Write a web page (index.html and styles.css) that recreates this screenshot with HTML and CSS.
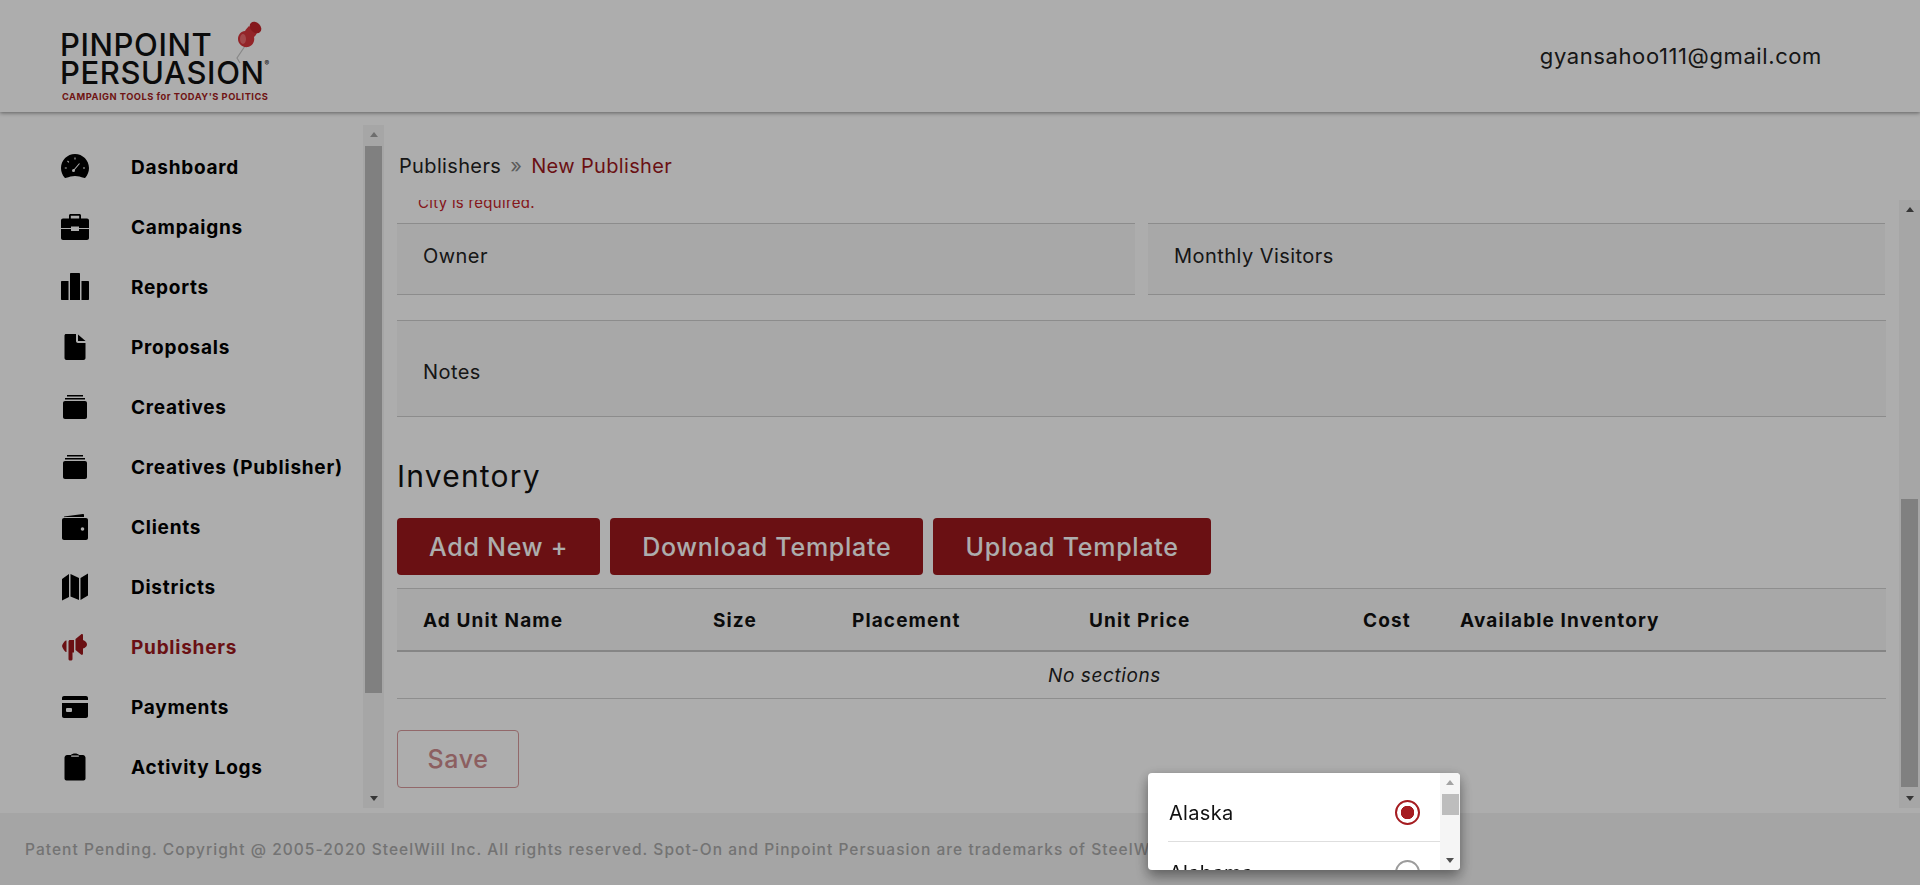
FILE: index.html
```html
<!DOCTYPE html>
<html lang="en">
  <head>
    <meta charset="UTF-8" />
    <title>Pinpoint Persuasion</title>
    <link rel="stylesheet" href="styles.css">
  </head>
  <body>
    <header class="header">
      <div class="logo">
        <div class="logo-name">PINPOINT</div>
        <div class="logo-name">PERSUASION<sup class="logo-reg">®</sup></div>
        <div class="logo-tag">CAMPAIGN TOOLS for TODAY'S POLITICS</div>
        <svg class="logo-pin" width="30" height="44" viewBox="0 0 30 44">
          <path d="M7 43l-3-5 8-12" fill="none" stroke="#c9c9c9" stroke-width="1.2" />
          <path d="M16 6l8 7c-1 2-2 3-3 4 1 4-1 9-6 10-5 1-10-3-10-8 0-4 3-8 7-8 1-2 3-4 4-5z" fill="#d9353b" />
          <ellipse cx="22.5" cy="7.5" rx="5" ry="6.5" transform="rotate(-45 22.5 7.5)" fill="#c4242a" />
          <ellipse cx="10" cy="19" rx="3" ry="5" fill="#ee6a6e" />
        </svg>
      </div>
      <div class="user-email">gyansahoo111@gmail.com</div>
    </header>

    <div class="middle">
      <aside class="sidebar">
        <nav class="nav">
          <a class="nav-item">
            <svg class="nav-icon" viewBox="0 0 28 28"><path d="M14 1C6.3 1 0 7.3 0 15c0 3.6 1.3 6.9 3.5 9.4.5.5 1.1.6 1.8.4C8 24 11 23 14 23s6 1 8.7 1.8c.7.2 1.3.1 1.8-.4C26.700 21.900 28 18.600 28 15 28 7.300 21.700 1 14 1z" /><path d="M12.500 17.500l6-7M14 4.500v2M6.500 8l1.400 1.300M3.800 15h2M22 15h2" stroke="#fff" stroke-width="1.1" /><circle cx="12.500" cy="17.500" r="1.500" fill="#fff" /></svg>
            <span>Dashboard</span>
          </a>
          <a class="nav-item">
            <svg class="nav-icon" viewBox="0 0 28 28"><path d="M8 6V2.500C8 1.700 8.700 1 9.500 1h9c.8 0 1.500.7 1.500 1.500V6h-1.800V2.800H9.800V6z" /><path d="M2 5.500h24c1.100 0 2 .9 2 2V15H18v-1.500h-8V15H0V7.500c0-1.100.9-2 2-2zM0 16h10v2h8v-2h10v9c0 1.100-.9 2-2 2H2c-1.100 0-2-.9-2-2z" /></svg>
            <span>Campaigns</span>
          </a>
          <a class="nav-item">
            <svg class="nav-icon" viewBox="0 0 28 28"><path d="M1 8h6.500v19H1c-.6 0-1-.4-1-1V9c0-.6.4-1 1-1zM9 1c0-.6.4-1 1-1h8c.6 0 1 .4 1 1v26H9zM20.500 8H27c.6 0 1 .4 1 1v17c0 .6-.4 1-1 1h-6.500z" /></svg>
            <span>Reports</span>
          </a>
          <a class="nav-item">
            <svg class="nav-icon" viewBox="0 0 28 28"><path d="M5 1h10v7c0 1.100.9 2 2 2h7.500v15c0 1.100-.9 2-2 2H5.500c-1.100 0-2-.9-2-2V2.500C3.500 1.700 4.200 1 5 1z" /><path d="M17 1.500L24.500 8H17z" /></svg>
            <span>Proposals</span>
          </a>
          <a class="nav-item">
            <svg class="nav-icon" viewBox="0 0 28 28"><path d="M6 2h16v1.500H6zM4 5h20v1.500H4z" /><path d="M4 8h20c1.100 0 2 .9 2 2v14c0 1.100-.9 2-2 2H4c-1.100 0-2-.9-2-2V10c0-1.100.9-2 2-2z" /></svg>
            <span>Creatives</span>
          </a>
          <a class="nav-item">
            <svg class="nav-icon" viewBox="0 0 28 28"><path d="M6 2h16v1.500H6zM4 5h20v1.500H4z" /><path d="M4 8h20c1.100 0 2 .9 2 2v14c0 1.100-.9 2-2 2H4c-1.100 0-2-.9-2-2V10c0-1.100.9-2 2-2z" /></svg>
            <span>Creatives (Publisher)</span>
          </a>
          <a class="nav-item">
            <svg class="nav-icon" viewBox="0 0 28 28"><path d="M3 3.500L22 1c.6 0 1 .4 1 1v2H5.500C4 4 3 4.500 3 3.500z" /><path d="M3 5h22c1.100 0 2 .9 2 2v18c0 1.100-.9 2-2 2H3c-1.100 0-2-.9-2-2V7c0-1.100.9-2 2-2z" /><circle cx="21.500" cy="16" r="1.800" fill="#fff" /></svg>
            <span>Clients</span>
          </a>
          <a class="nav-item">
            <svg class="nav-icon" viewBox="0 0 28 28"><path d="M1 6l7-5v23l-7 3.500zM9.500 1l8.500 4v22l-8.500-3.500zM19.500 5L27 0.500V22.500l-7.500 4.500z" /></svg>
            <span>Districts</span>
          </a>
          <a class="nav-item nav-active">
            <svg class="nav-icon" viewBox="0 0 28 28"><path d="M20 1.500c1-.8 2-.3 2 1v4.500c2 .5 4 2.500 4 4.500 0 2-2 3.500-4 4v5c0 1.300-1 1.800-2 1l-5.500-4.500V6zM13 7v12.500l-1.500 0V26c0 1-.8 1.500-2 1.500s-2-.5-2-1.500V8.500c0-.8.7-1.500 1.500-1.500zM5.500 7.500V19H4.800C3.500 18 1.500 15 1 13c.5-2 2.500-5 3.800-5.500z" /></svg>
            <span>Publishers</span>
          </a>
          <a class="nav-item">
            <svg class="nav-icon" viewBox="0 0 28 28"><path d="M3 3h22c1.100 0 2 .9 2 2v2H1V5c0-1.100.9-2 2-2zM1 10h26v13c0 1.100-.9 2-2 2H3c-1.100 0-2-.9-2-2z" /><rect x="5" y="15" width="6" height="4" rx="1" fill="#fff" /></svg>
            <span>Payments</span>
          </a>
          <a class="nav-item">
            <svg class="nav-icon" viewBox="0 0 28 28"><path d="M6 2h4c.8-1 2.200-1.500 4-1.500s3.200.5 4 1.500h4c1.100 0 2.500 1.400 2.500 2.500v21c0 1.100-.9 2-2 2h-17c-1.100 0-2-.9-2-2v-21C3.500 3.400 4.900 2 6 2z" /><rect x="10" y="2.500" width="8" height="1.200" rx=".6" fill="#fff" /></svg>
            <span>Activity Logs</span>
          </a>
        </nav>
        <div class="scrollbar scrollbar-side">
          <span class="arrow-up arrow-off"></span>
          <span class="thumb thumb-side"></span>
          <span class="arrow-down"></span>
        </div>
      </aside>

      <main class="main">
        <div class="crumbs">
          <span>Publishers</span>
          <span class="crumb-sep">»</span>
          <span class="crumb-current">New Publisher</span>
        </div>
        <div class="main-body">
          <div class="form">
            <div class="field-error">City is required.</div>
            <div class="field-row">
              <div class="field">Owner</div>
              <div class="field">Monthly Visitors</div>
            </div>
            <div class="field field-notes">Notes</div>

            <h2 class="section-title">Inventory</h2>
            <div class="btn-row">
              <button class="btn">Add New +</button>
              <button class="btn">Download Template</button>
              <button class="btn">Upload Template</button>
            </div>

            <div class="table-head">
              <div>Ad Unit Name</div>
              <div>Size</div>
              <div>Placement</div>
              <div>Unit Price</div>
              <div>Cost</div>
              <div>Available Inventory</div>
            </div>
            <div class="table-empty">No sections</div>

            <button class="btn-save">Save</button>
          </div>
          <div class="scrollbar scrollbar-main">
            <span class="arrow-up"></span>
            <span class="thumb thumb-main"></span>
            <span class="arrow-down"></span>
          </div>
        </div>
      </main>
    </div>

    <footer class="footer">Patent Pending. Copyright @ 2005-2020 SteelWill Inc. All rights reserved. Spot-On and Pinpoint Persuasion are trademarks of SteelWill Inc.</footer>

    <div class="overlay"></div>

    <div class="dialog">
      <div class="dialog-list">
        <div class="option">
          <span>Alaska</span>
          <span class="radio radio-on"></span>
        </div>
        <div class="option">
          <span>Alabama</span>
          <span class="radio"></span>
        </div>
      </div>
      <div class="scrollbar scrollbar-dialog">
        <span class="arrow-up arrow-off"></span>
        <span class="thumb thumb-dialog"></span>
        <span class="arrow-down"></span>
      </div>
    </div>
  </body>
</html>
```

FILE: styles.css
```css
* {
  box-sizing: border-box;
}

body {
  margin: 0;
  height: 885px;
  overflow: hidden;
  display: flex;
  flex-direction: column;
  background-color: #fff;
  color: #111;
  font-family: Inter, "Open Sans", sans-serif;
}

/* header */
.header {
  height: 112px;
  flex: none;
  display: flex;
  justify-content: space-between;
  align-items: center;
  padding: 0 98px 0 60px;
  background-color: #fff;
  box-shadow: 0 1px 4px rgba(0, 0, 0, 0.45);
  position: relative;
  z-index: 2;
}

.logo {
  position: relative;
  width: 214px;
  padding-top: 20px;
}

.logo-name {
  font-size: 31px;
  font-weight: 500;
  line-height: 28px;
  letter-spacing: 0.6px;
  color: #111;
}

.logo-reg {
  font-size: 7px;
  line-height: 0;
  vertical-align: 18px;
  letter-spacing: 0;
}

.logo-tag {
  margin: 4px 0 0 2px;
  font-size: 9.3px;
  font-weight: 700;
  line-height: 11px;
  letter-spacing: 0.5px;
  white-space: nowrap;
  color: #a51c21;
}

.logo-pin {
  position: absolute;
  left: 173px;
  top: 9px;
}

.user-email {
  font-size: 22px;
  color: #222;
  letter-spacing: 0.6px;
}

/* middle */
.middle {
  height: 701px;
  flex: none;
  display: flex;
}

.sidebar {
  width: 384px;
  flex: none;
  display: flex;
  padding-top: 13px;
}

.nav {
  width: 363px;
  padding: 12px 0 0 61px;
}

.nav-item {
  height: 60px;
  display: flex;
  align-items: center;
  font-size: 19px;
  font-weight: 700;
  letter-spacing: 0.75px;
  white-space: nowrap;
  color: #000;
}

.nav-icon {
  width: 28px;
  height: 28px;
  margin-right: 42px;
  flex: none;
  fill: currentColor;
}

.nav-active {
  color: #9d191d;
}

/* scrollbars */
.scrollbar {
  width: 21px;
  display: flex;
  flex-direction: column;
  align-items: center;
  background-color: #f5f5f5;
}

.scrollbar-side {
  height: 683px;
}

.scrollbar-main {
  height: 608px;
}

.thumb {
  width: 17px;
  flex: none;
  background-color: #bdbdbd;
}

.thumb-side {
  height: 547px;
  margin-top: 9px;
}

.thumb-main {
  height: 288px;
  margin-top: 287px;
}

.arrow-up,
.arrow-down {
  flex: none;
  width: 0;
  height: 0;
  border-left: 4.5px solid transparent;
  border-right: 4.5px solid transparent;
}

.arrow-up {
  margin-top: 7px;
  border-bottom: 5px solid #505050;
}

.arrow-off {
  border-bottom-color: #a3a3a3;
}

.arrow-down {
  margin-top: auto;
  margin-bottom: 7px;
  border-top: 5px solid #505050;
}

/* main column */
.main {
  flex: 1;
  min-width: 0;
}

.crumbs {
  height: 88px;
  padding: 39px 0 0 15px;
  font-size: 20px;
  line-height: 30px;
  letter-spacing: 0.35px;
  color: #222;
}

.crumb-sep {
  margin: 0 3px;
  color: #888;
}

.crumb-current {
  color: #9d191d;
}

.main-body {
  display: flex;
  justify-content: space-between;
  padding-left: 13px;
}

.form {
  width: 1489px;
}

.field-error {
  height: 23px;
  overflow: hidden;
  display: flex;
  align-items: flex-end;
  padding: 0 0 11px 21px;
  font-size: 15px;
  line-height: 18px;
  letter-spacing: 0.3px;
  color: #c4242a;
}

.field-row {
  display: grid;
  grid-template-columns: 738px 737px;
  column-gap: 13px;
}

.field {
  height: 72px;
  display: flex;
  align-items: center;
  padding: 0 0 6px 26px;
  font-size: 20px;
  letter-spacing: 0.45px;
  color: #222;
  background-color: #f8f8f8;
  border-top: 1px solid #cfcfcf;
  border-bottom: 1px solid #cfcfcf;
}

.field-notes {
  height: 97px;
  margin-top: 25px;
  padding: 6px 0 0 26px;
}

.section-title {
  margin: 39px 0 21px;
  font-size: 30px;
  line-height: 41px;
  font-weight: 400;
  letter-spacing: 1.2px;
  color: #111;
}

.btn-row {
  display: flex;
  gap: 10px;
}

.btn {
  height: 57px;
  padding: 0 32px;
  border: 0;
  border-radius: 4px;
  font-family: inherit;
  font-size: 25px;
  font-weight: 500;
  letter-spacing: 0.75px;
  color: #fff;
  background-color: #9d191d;
}

.table-head {
  height: 64px;
  margin-top: 13px;
  padding-top: 2px;
  display: grid;
  grid-template-columns: 316px 139px 237px 274px 97px 1fr;
  align-items: center;
  font-size: 19px;
  font-weight: 700;
  letter-spacing: 1.12px;
  color: #111;
  background-color: #f8f8f8;
  border-top: 1px solid #d2d2d2;
  border-bottom: 2px solid #c4c4c4;
}

.table-head div:first-child {
  padding-left: 26px;
}

.table-empty {
  height: 47px;
  display: flex;
  align-items: center;
  justify-content: center;
  padding-right: 74px;
  font-size: 19px;
  font-style: italic;
  letter-spacing: 0.6px;
  color: #222;
  border-bottom: 1px solid #d2d2d2;
}

.btn-save {
  display: block;
  width: 122px;
  height: 58px;
  margin-top: 31px;
  border: 1px solid #d79a9c;
  border-radius: 4px;
  font-family: inherit;
  font-size: 25px;
  font-weight: 500;
  letter-spacing: 0.6px;
  color: #ce8c8e;
  background-color: #fff;
}

/* footer */
.footer {
  height: 72px;
  flex: none;
  padding: 0 0 0 25px;
  display: flex;
  align-items: center;
  font-size: 15.5px;
  font-weight: 500;
  letter-spacing: 1.05px;
  white-space: nowrap;
  color: #aaa;
  background-color: #f3f3f3;
}

/* dialog on the dimmed page */
.overlay {
  position: fixed;
  inset: 0;
  z-index: 5;
  background-color: rgba(0, 0, 0, 0.32);
}

.dialog {
  position: fixed;
  left: 1148px;
  top: 773px;
  width: 312px;
  height: 97px;
  z-index: 6;
  display: flex;
  overflow: hidden;
  border-radius: 4px;
  background-color: #fff;
  box-shadow: 0 8px 14px rgba(0, 0, 0, 0.3), 0 2px 12px rgba(0, 0, 0, 0.2);
}

.dialog-list {
  flex: 1;
  min-width: 0;
  padding: 9px 0 0 20px;
}

.option {
  height: 60px;
  padding: 2px 20px 0 1px;
  display: flex;
  justify-content: space-between;
  align-items: center;
  font-size: 20px;
  letter-spacing: 0.3px;
  color: #111;
  border-bottom: 1px solid #dedede;
}

.radio {
  width: 25px;
  height: 25px;
  flex: none;
  border: 2px solid #9c9c9c;
  border-radius: 50%;
}

.radio-on {
  border-color: #a51c21;
  background: radial-gradient(circle, #a51c21 0 6.5px, #fff 7px);
}

.scrollbar-dialog {
  width: 20px;
  flex: none;
  height: 97px;
}

.thumb-dialog {
  height: 21px;
  margin-top: 9px;
}
```
